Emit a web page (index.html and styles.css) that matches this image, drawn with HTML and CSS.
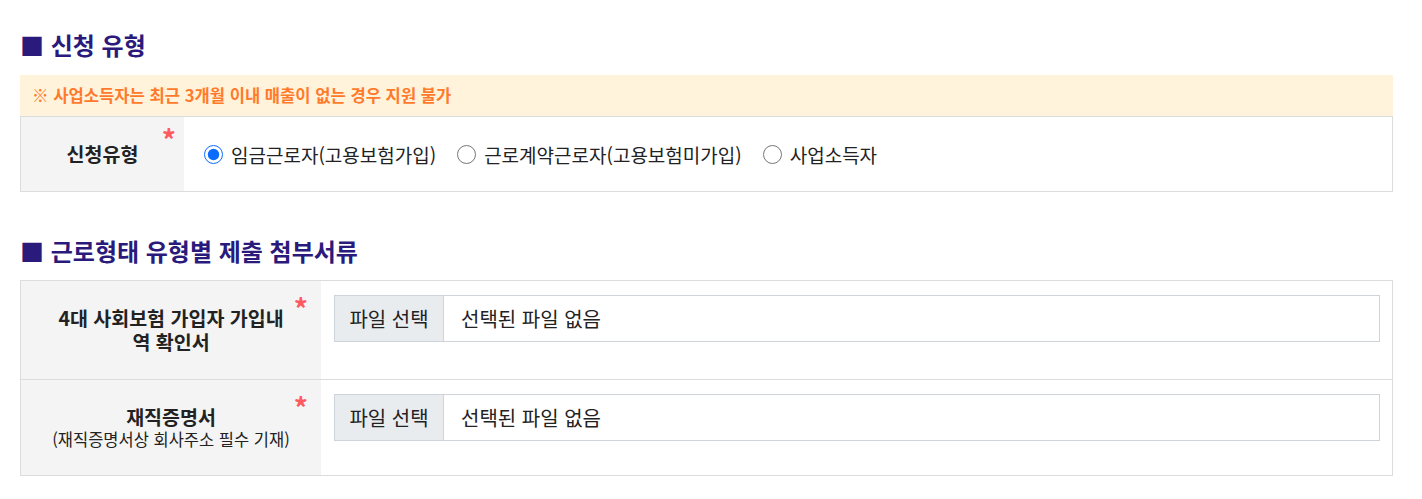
FILE: index.html
```html
<!DOCTYPE html>
<html lang="ko">
<head>
<meta charset="utf-8">
<title>신청 유형</title>
<link rel="stylesheet" href="styles.css">
</head>
<body>
<div class="page">
  <h2 class="sec-title">■ 신청 유형</h2>
  <p class="notice">※ 사업소득자는 최근 3개월 이내 매출이 없는 경우 지원 불가</p>
  <div class="form-table type-table">
    <div class="th"><span class="label">신청유형</span><span class="req">*</span></div>
    <div class="td radios">
      <label class="radio"><input type="radio" name="type" checked><span>임금근로자(고용보험가입)</span></label>
      <label class="radio"><input type="radio" name="type"><span>근로계약근로자(고용보험미가입)</span></label>
      <label class="radio"><input type="radio" name="type"><span>사업소득자</span></label>
    </div>
  </div>

  <h2 class="sec-title second">■ 근로형태 유형별 제출 첨부서류</h2>
  <div class="form-table doc-table">
    <div class="th"><span class="label">4대 사회보험 가입자 가입내역 확인서</span><span class="req">*</span></div>
    <div class="td">
      <div class="file"><span class="file-btn">파일 선택</span><span class="file-name">선택된 파일 없음</span></div>
    </div>
    <div class="th row2"><div class="label"><span class="main">재직증명서</span><span class="sub">(재직증명서상 회사주소 필수 기재)</span></div><span class="req">*</span></div>
    <div class="td row2">
      <div class="file"><span class="file-btn">파일 선택</span><span class="file-name">선택된 파일 없음</span></div>
    </div>
  </div>
</div>
</body>
</html>
```

FILE: styles.css
```css
* { box-sizing: border-box; }
body {
  margin: 0;
  background: #fff;
  font-family: "Noto Sans CJK KR", "Noto Sans", sans-serif;
  color: #222;
}
.page {
  padding: 30px 29px 0 20px;
}
.sec-title {
  margin: 0 0 15px 0;
  font-size: 24px;
  line-height: 30px;
  font-weight: 700;
  color: #2a1a7c;
  letter-spacing: 0;
}
.sec-title.second {
  margin-top: 44px;
  margin-bottom: 14px;
}
.notice {
  margin: 0;
  height: 41px;
  padding: 0 12px;
  background: #fff3dc;
  color: #ff7a2a;
  font-size: 16.6px;
  font-weight: 700;
  line-height: 41px;
}
.form-table {
  display: grid;
  border: 1px solid #dcdcdc;
}
.type-table { grid-template-columns: 163px 1fr; }
.doc-table { grid-template-columns: 300px 1fr; }
.th {
  position: relative;
  background: #f4f4f4;
  display: flex;
  align-items: center;
  justify-content: center;
  text-align: center;
  padding: 25px 36px;
}
.label {
  font-size: 19.5px;
  font-weight: 700;
  line-height: 24px;
  color: #222;
  word-break: break-all;
}
.main {
  display: block;
  line-height: 23px;
}
.sub {
  display: block;
  font-size: 16.5px;
  font-weight: 400;
  line-height: 22px;
  white-space: nowrap;
}
.req {
  position: absolute;
  top: 8px;
  right: 8px;
  color: #ff5a5f;
  font-size: 28px;
  line-height: 28px;
  font-weight: 700;
}
.doc-table .req { top: 13px; right: 13px; }
.row2 { border-top: 1px solid #dcdcdc; }
.td {
  background: #fff;
}
.radios {
  display: flex;
  align-items: center;
  gap: 21px;
  padding: 0 20px;
}
.radio {
  display: flex;
  align-items: center;
  gap: 8px;
  font-size: 19px;
  color: #222;
  cursor: pointer;
}
.radio input {
  margin: 0;
  width: 19px;
  height: 19px;
  accent-color: #0a6cff;
}
.doc-table .td {
  padding: 14px 12px 0 13px;
}
.file {
  display: flex;
  height: 47px;
  border: 1px solid #cfd4da;
  font-size: 20px;
  color: #222;
}
.file-btn {
  width: 109px;
  background: #e9ecef;
  border-right: 1px solid #cfd4da;
  display: flex;
  align-items: center;
  justify-content: center;
}
.file-name {
  display: flex;
  align-items: center;
  padding-left: 17px;
}
```
